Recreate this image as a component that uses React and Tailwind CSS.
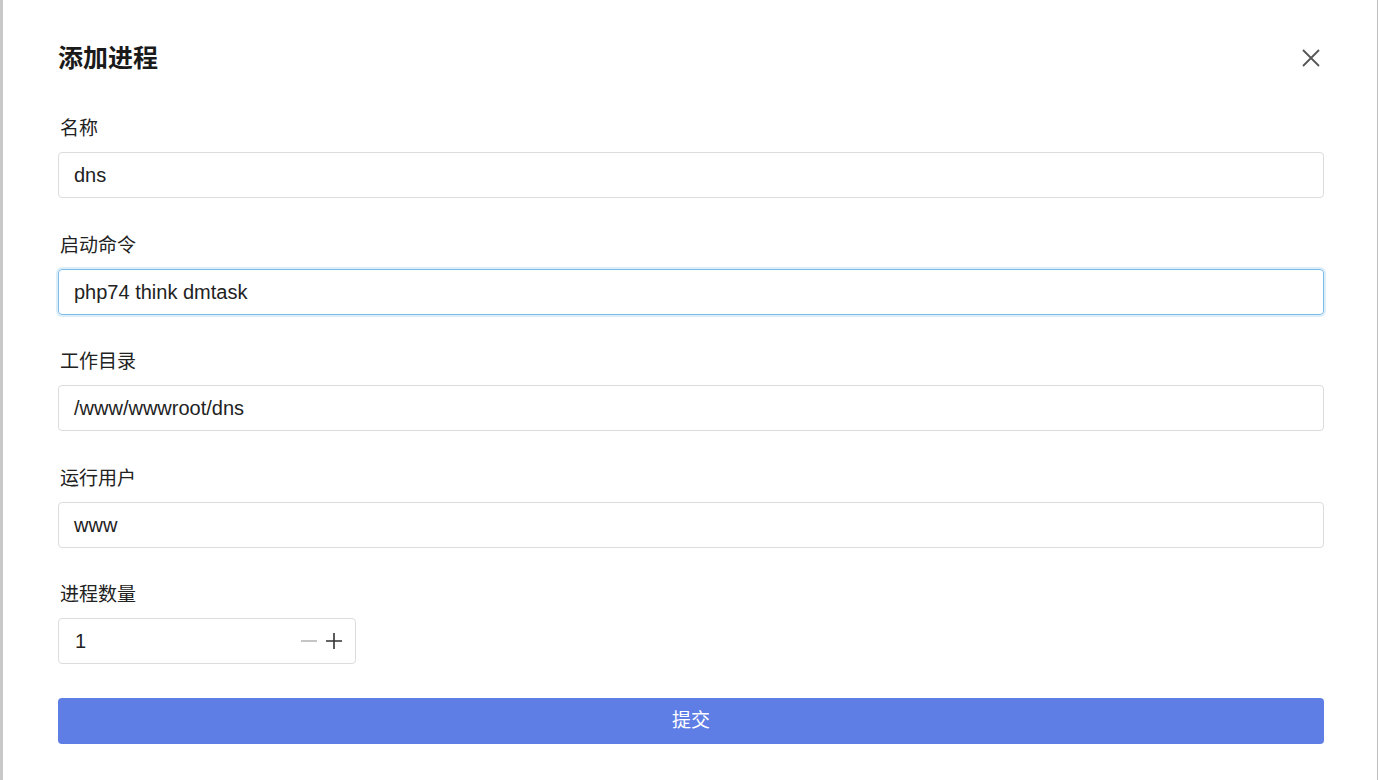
const FONT = { fontFamily: '"Liberation Sans", "Noto Sans CJK SC", sans-serif' };

function Label({ children }) {
  return <div className="h-[26px] pl-[2px] text-[19px] leading-[26px] text-[#222] mb-[10px]">{children}</div>;
}

function Field({ label, value, focused }) {
  return (
    <div className="mb-[34.5px]">
      <Label>{label}</Label>
      <div
        className={
          focused
            ? 'h-[46px] rounded-[4px] border border-[#7dbbe9] shadow-[0_0_0_2px_rgba(125,187,233,0.25)] flex items-center px-[15px] text-[20px] text-[#222]'
            : 'h-[46px] rounded-[4px] border border-[#dcdcdc] flex items-center px-[15px] text-[20px] text-[#222]'
        }
      >
        {value}
      </div>
    </div>
  );
}

function CloseIcon() {
  return (
    <svg width="20" height="20" viewBox="0 0 20 20" className="text-[#555]">
      <path d="M2 2 L18 18 M18 2 L2 18" stroke="currentColor" strokeWidth="1.8" fill="none" />
    </svg>
  );
}

export default function App() {
  return (
    <div className="w-[1380px] h-[780px] flex bg-white overflow-hidden" style={FONT}>
      <div className="w-[3px] bg-[#c8c8c8]" />
      <div className="flex-1 pl-[55px] pr-[53px] pt-[43px]">
        <div className="flex items-center justify-between mb-[43px] h-[30px]">
          <h1 className="text-[25px] leading-[30px] font-bold text-[#1a1a1a]">添加进程</h1>
          <div className="mr-[3px]">
            <CloseIcon />
          </div>
        </div>

        <Field label="名称" value="dns" />
        <Field label="启动命令" value="php74 think dmtask" focused />
        <Field label="工作目录" value="/www/wwwroot/dns" />
        <Field label="运行用户" value="www" />

        <div className="mb-[34px]">
          <Label>进程数量</Label>
          <div className="w-[298px] h-[46px] rounded-[4px] border border-[#dcdcdc] flex items-center pl-[16px] pr-[12px] text-[20px] text-[#222]">
            <span className="flex-1">1</span>
            <span className="w-[16px] h-[1.5px] bg-[#c4c4c4] mr-[8px]" />
            <svg width="18" height="18" viewBox="0 0 18 18" className="text-[#333]">
              <path d="M9 1 V17 M1 9 H17" stroke="currentColor" strokeWidth="1.6" fill="none" />
            </svg>
          </div>
        </div>

        <button className="w-full h-[46px] rounded-[4px] bg-[#5e7ee6] text-white text-[19px] flex items-center justify-center">
          提交
        </button>
      </div>
      <div className="w-[1px] bg-[#bdbdbd]" />
      <div className="w-[2px] bg-white" />
    </div>
  );
}
